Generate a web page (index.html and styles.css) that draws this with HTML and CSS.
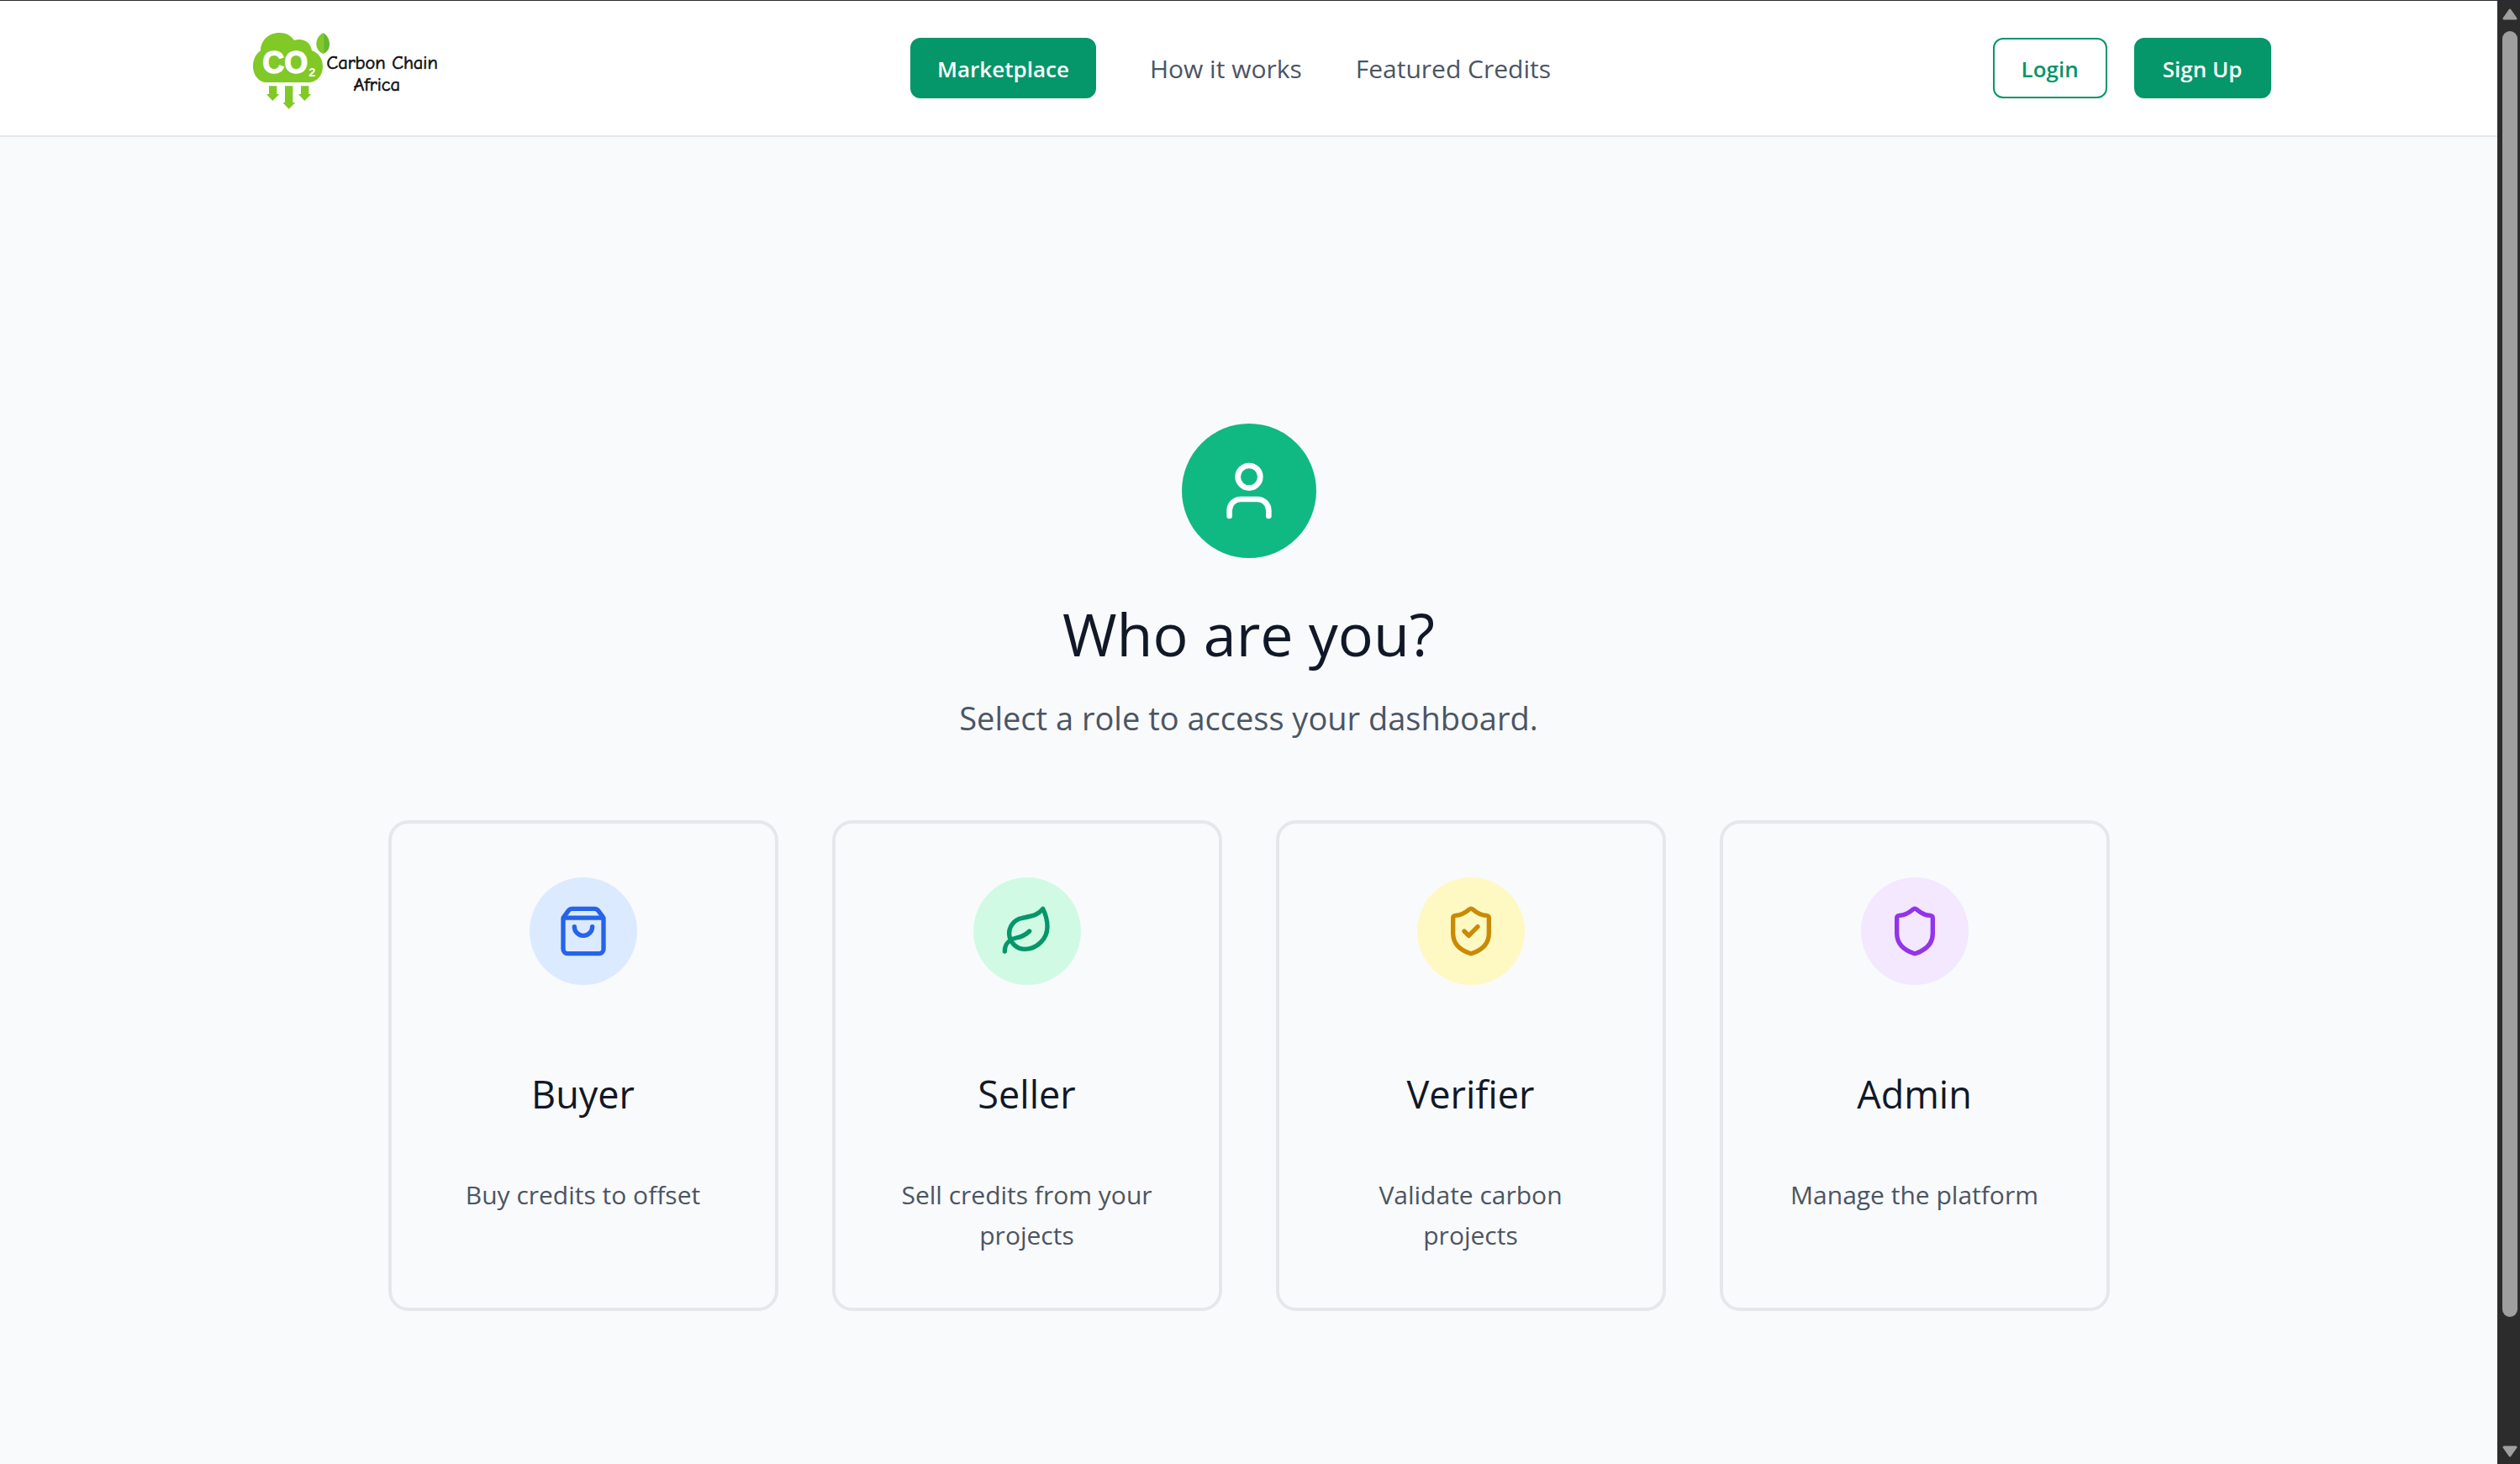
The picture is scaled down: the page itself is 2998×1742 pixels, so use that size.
FILE: index.html
```html
<!DOCTYPE html>
<html lang="en">
<head>
<meta charset="utf-8">
<meta name="viewport" content="width=device-width, initial-scale=1">
<title>Carbon Chain Africa</title>
<link rel="stylesheet" href="styles.css">
</head>
<body>
<div class="page">
  <header class="header">
    <div class="header-inner">
      <a class="brand" href="#" aria-label="Carbon Chain Africa">
        <svg class="logo" viewBox="-33 21 864 324" aria-hidden="true">
          <g fill="#80c926">
            <path d="M102 234C78 230 60 206 60 177C60 152 71 131 87 121C87 84 116 57 154 57C178 57 196 67 207 84C238 74 266 90 270 121C294 128 309 150 309 178C309 208 290 231 264 234Z"/>
            <path d="M117 247h28v29h9l-24 24-22-24h9zM174 247h28v59h9l-23 23-22-23h8zM231 247h28v29h9l-24 24-22-24h9z"/>
          </g>
          <path fill="#80c926" d="M310 57C292 68 286 82 286 99C287 114 296 127 310 132Z"/>
          <path fill="#65b82e" d="M310 57C326 67 333 81 333 98C333 114 325 126 310 132Z"/>
          <text class="logo-formula" x="94" y="200">CO</text>
          <text class="logo-sub" x="259" y="213">2</text>
          <text class="logo-name" x="521" y="185">Carbon Chain</text>
          <text class="logo-name" x="502" y="263">Africa</text>
        </svg>
      </a>
      <nav class="nav">
        <a class="btn btn-solid" href="#">Marketplace</a>
        <a class="nav-link" href="#">How it works</a>
        <a class="nav-link" href="#">Featured Credits</a>
      </nav>
      <div class="actions">
        <button class="btn btn-wide btn-outline" type="button">Login</button>
        <button class="btn btn-wide btn-solid" type="button">Sign Up</button>
      </div>
    </div>
  </header>

  <main class="main">
    <div class="hero-badge">
      <svg class="icon icon-lg" viewBox="0 0 24 24" aria-hidden="true"><path d="M19 21v-2a4 4 0 0 0-4-4H9a4 4 0 0 0-4 4v2"/><circle cx="12" cy="7" r="4"/></svg>
    </div>
    <h1 class="title">Who are you?</h1>
    <p class="subtitle">Select a role to access your dashboard.</p>
    <div class="roles">
      <button class="card" type="button">
        <span class="badge badge-blue"><svg class="icon" viewBox="0 0 24 24" aria-hidden="true"><path d="M16 10a4 4 0 0 1-8 0"/><path d="M3.103 6.034h17.794"/><path d="M3.4 5.467a2 2 0 0 0-.4 1.2V20a2 2 0 0 0 2 2h14a2 2 0 0 0 2-2V6.667a2 2 0 0 0-.4-1.2l-2-2.667A2 2 0 0 0 17 2H7a2 2 0 0 0-1.6.8z"/></svg></span>
        <span class="card-title">Buyer</span>
        <span class="card-text">Buy credits to offset</span>
      </button>
      <button class="card" type="button">
        <span class="badge badge-green"><svg class="icon" viewBox="0 0 24 24" aria-hidden="true"><path d="M11 20A7 7 0 0 1 9.8 6.1C15.5 5 17 4.48 19 2c1 2 2 4.18 2 8 0 5.5-4.78 10-10 10Z"/><path d="M2 21c0-3 1.85-5.36 5.08-6C9.5 14.52 12 13 13 12"/></svg></span>
        <span class="card-title">Seller</span>
        <span class="card-text">Sell credits from your projects</span>
      </button>
      <button class="card" type="button">
        <span class="badge badge-yellow"><svg class="icon" viewBox="0 0 24 24" aria-hidden="true"><path d="M20 13c0 5-3.5 7.5-7.66 8.95a1 1 0 0 1-.67-.01C7.5 20.5 4 18 4 13V6a1 1 0 0 1 1-1c2 0 4.5-1.2 6.24-2.72a1.17 1.17 0 0 1 1.52 0C14.51 3.81 17 5 19 5a1 1 0 0 1 1 1z"/><path d="m9 12 2 2 4-4"/></svg></span>
        <span class="card-title">Verifier</span>
        <span class="card-text">Validate carbon projects</span>
      </button>
      <button class="card" type="button">
        <span class="badge badge-purple"><svg class="icon" viewBox="0 0 24 24" aria-hidden="true"><path d="M20 13c0 5-3.5 7.5-7.66 8.95a1 1 0 0 1-.67-.01C7.5 20.5 4 18 4 13V6a1 1 0 0 1 1-1c2 0 4.5-1.2 6.24-2.72a1.17 1.17 0 0 1 1.52 0C14.51 3.81 17 5 19 5a1 1 0 0 1 1 1z"/></svg></span>
        <span class="card-title">Admin</span>
        <span class="card-text">Manage the platform</span>
      </button>
    </div>
  </main>
</div>
<div class="scrollbar" aria-hidden="true">
  <svg class="arrow" viewBox="0 0 18 14"><path d="M9 2 16 12H2Z"/></svg>
  <div class="track"><div class="thumb"></div></div>
  <svg class="arrow" viewBox="0 0 18 14"><path d="M9 12 16 2H2Z"/></svg>
</div>
</body>
</html>
```
FILE: styles.css
```css
* {
  box-sizing: border-box;
}

body {
  margin: 0;
  height: 100vh;
  display: grid;
  grid-template-columns: minmax(0, 1fr) 27px;
  overflow: hidden;
  border-top: 1px solid #2c2a33;
  background: #f9fafc;
  font-family: "Open Sans", "Noto Sans", sans-serif;
  color: #111827;
}

.page {
  min-width: 0;
}

/* Header */
.header {
  background: #ffffff;
  border-bottom: 2px solid #e5e7eb;
}

.header-inner {
  max-width: 2560px;
  margin: 0 auto;
  padding: 26px 64px;
  display: flex;
  align-items: center;
  justify-content: space-between;
}

.brand,
.logo {
  display: block;
}

.logo {
  width: 288px;
  height: 108px;
}

.logo-formula {
  font: 700 108px "Liberation Sans", sans-serif;
  fill: #ffffff;
  stroke: #ffffff;
  stroke-width: 4px;
}

.logo-sub {
  font: 700 44px "Liberation Sans", sans-serif;
  fill: #ffffff;
}

.logo-name {
  font: 500 67px "Comic Sans MS", "Comic Neue", "Open Sans", cursive;
  fill: #111111;
  stroke: #111111;
  stroke-width: 2px;
  text-anchor: middle;
}

.nav {
  display: flex;
  align-items: center;
  gap: 64px;
}

.nav-link {
  padding-top: 2px;
  color: #4b5563;
  font-size: 30px;
  line-height: 48px;
  text-decoration: none;
}

.actions {
  display: flex;
  gap: 32px;
}

.btn {
  height: 72px;
  padding: 2px 30px 0;
  display: flex;
  align-items: center;
  border: 2px solid #059669;
  border-radius: 12px;
  font-family: inherit;
  font-size: 26px;
  font-weight: 600;
  line-height: 40px;
  text-decoration: none;
}

.btn-wide {
  padding: 2px 32px 0;
}

.btn-solid {
  background: #059669;
  color: #ffffff;
}

.btn-outline {
  background: #ffffff;
  color: #059669;
}

/* Role picker */
.main {
  padding: 341px 64px 96px;
  display: flex;
  flex-direction: column;
  align-items: center;
}

.hero-badge {
  width: 160px;
  height: 160px;
  display: grid;
  place-items: center;
  border-radius: 50%;
  background: #10b981;
  color: #ffffff;
}

.icon {
  width: 64px;
  height: 64px;
  fill: none;
  stroke: currentColor;
  stroke-width: 2;
  stroke-linecap: round;
  stroke-linejoin: round;
}

.icon-lg {
  width: 80px;
  height: 80px;
}

.title {
  margin: 50px 0 32px;
  font-size: 70px;
  font-weight: 400;
  line-height: 80px;
}

.subtitle {
  margin: 0 0 94px;
  color: #4b5563;
  font-size: 38px;
  line-height: 56px;
}

.roles {
  width: 100%;
  max-width: 2048px;
  display: grid;
  grid-template-columns: repeat(4, minmax(0, 1fr));
  gap: 64px;
}

.card {
  padding: 64px 64px 62px;
  display: flex;
  flex-direction: column;
  align-items: center;
  border: 4px solid #e5e7eb;
  border-radius: 24px;
  background: transparent;
  color: inherit;
  font-family: inherit;
  text-align: center;
}

.badge {
  width: 128px;
  height: 128px;
  margin-bottom: 98px;
  display: grid;
  place-items: center;
  border-radius: 50%;
}

.badge-blue {
  background: #dbeafe;
  color: #2563eb;
}

.badge-green {
  background: #d1fae5;
  color: #059669;
}

.badge-yellow {
  background: #fef9c3;
  color: #ca8a04;
}

.badge-purple {
  background: #f3e8ff;
  color: #9333ea;
}

.card-title {
  margin-bottom: 64px;
  font-size: 45px;
  line-height: 64px;
}

.card-text {
  color: #4b5563;
  font-size: 30px;
  line-height: 48px;
}

/* Window scrollbar */
.scrollbar {
  padding: 9px 3px 8px 6px;
  display: flex;
  flex-direction: column;
  gap: 13px;
  background: #2c2c2c;
}

.arrow {
  display: block;
  width: 18px;
  height: 14px;
  fill: #9f9f9f;
  stroke: #9f9f9f;
  stroke-width: 3;
  stroke-linejoin: round;
}

.track {
  flex: 1;
  display: grid;
  grid-template-rows: 153fr 14fr;
}

.thumb {
  border-radius: 9px;
  background: #9f9f9f;
}
```
